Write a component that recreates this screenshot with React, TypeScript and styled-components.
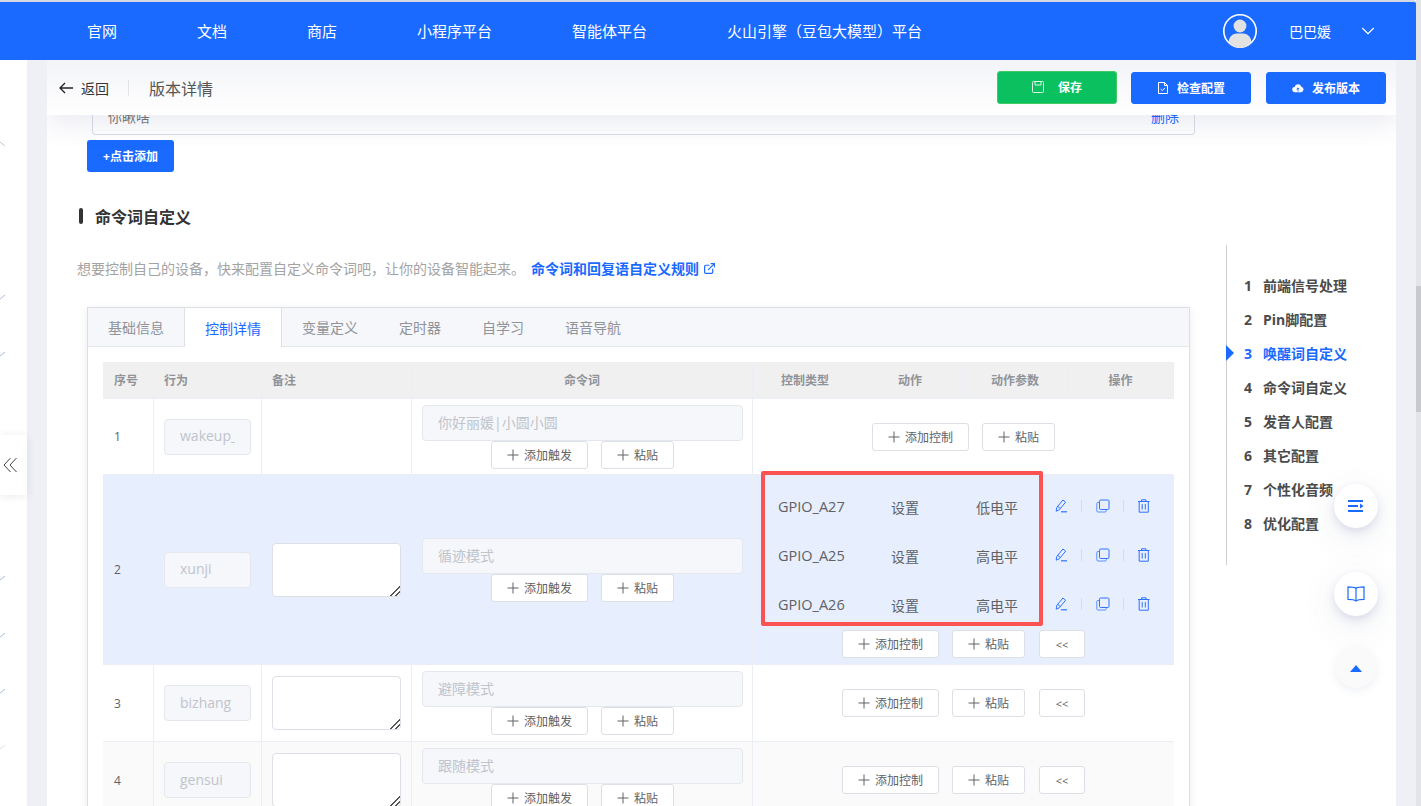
import React from "react";
import styled, { createGlobalStyle } from "styled-components";
import { ChevronDown, ExternalLink } from "lucide-react";

const BLUE = "#1a6aff";
const FONT = `"Open Sans", "Noto Sans CJK SC", "Noto Sans", sans-serif`;

const Global = createGlobalStyle`
  html, body { margin: 0; padding: 0; overflow: hidden; background: #fff; }
  body { font-family: ${FONT}; }
  * { box-sizing: border-box; }
`;

const Root = styled.div`
  display: flex;
  width: 1421px;
  height: 806px;
  overflow: hidden;
  background: #fff;
`;
const PageColumn = styled.div`
  width: 1416px;
  height: 806px;
  display: flex;
  flex-direction: column;
`;
const ScrollTrack = styled.div`
  width: 5px;
  height: 806px;
  padding-top: 286px;
  background: #e3e4e8;
`;
const ScrollThumb = styled.div`
  height: 126px;
  background: #c8c9cd;
`;
const TopBar = styled.header`
  height: 60px;
  flex-shrink: 0;
  display: flex;
  align-items: center;
  padding-left: 87px;
  gap: 80px;
  background: ${BLUE};
  border-top: 2px solid #d4d9e4;
  border-top-right-radius: 3px;
  color: #fff;
  font-size: 15px;
  position: relative;
  z-index: 3;
`;
const NavLink = styled.span`
  white-space: nowrap;
  line-height: 20px;
`;
const UserBox = styled.div`
  margin-left: auto;
  display: flex;
  align-items: center;
  font-size: 14px;
  padding-right: 37px;
`;
const UserName = styled.span`
  margin: 0 26px 0 31px;
`;
const Body = styled.div`
  flex: 1;
  min-height: 0;
  display: flex;
  background: #eef0f5;
`;
const LeftPanel = styled.aside`
  width: 27px;
  flex-shrink: 0;
  background: #fff;
  display: flex;
  flex-direction: column;
`;
const LeftMark = styled.svg<{ $top: number }>`
  display: block;
  margin-top: ${(p) => p.$top}px;
  flex-shrink: 0;
`;
const CollapseTab = styled.div`
  height: 60px;
  margin-top: 78px;
  flex-shrink: 0;
  display: flex;
  align-items: center;
  padding-left: 2px;
  background: #fff;
  box-shadow: 0 1px 8px rgba(40, 50, 90, 0.1);
`;
const Main = styled.main`
  position: relative;
  margin-left: 20px;
  width: 1349px;
  flex-shrink: 0;
  display: flex;
  flex-direction: column;
  background: #fff;
  overflow: hidden;
`;
const SubHeader = styled.div`
  position: relative;
  z-index: 2;
  height: 55px;
  flex-shrink: 0;
  display: flex;
  align-items: center;
  padding: 0 10px 0 12px;
  background: linear-gradient(180deg, #f3f4f8 0%, #ffffff 100%);
  box-shadow: 0 8px 28px rgba(70, 85, 140, 0.12);
`;
const BackLink = styled.div`
  display: flex;
  align-items: center;
  gap: 8px;
  font-size: 14px;
  color: #333;
`;
const SubDivider = styled.span`
  width: 1px;
  height: 16px;
  margin: 0 20px 0 19px;
  background: #e2e4ea;
`;
const PageTitle = styled.span`
  font-size: 16px;
  color: #555;
`;
const ActionGroup = styled.div`
  margin-left: auto;
  display: flex;
  align-items: center;
  gap: 14px;
`;
const ActionButton = styled.button<{ $green?: boolean; $last?: boolean }>`
  width: 120px;
  height: ${(p) => (p.$green ? 33 : 32)}px;
  margin-top: ${(p) => (p.$green ? -1 : 0)}px;
  margin-left: ${(p) => (p.$last ? 1 : 0)}px;
  display: flex;
  align-items: center;
  justify-content: center;
  gap: ${(p) => (p.$green ? 14 : 8)}px;
  border: 1px solid ${(p) => (p.$green ? "#3fc863" : BLUE)};
  border-radius: 3px;
  background: ${(p) => (p.$green ? "#0bc15f" : BLUE)};
  color: #fff;
  font: 700 12px ${FONT};
  padding: 0;
`;
const ContentRow = styled.div`
  display: flex;
  margin-top: -20px;
  flex: 1;
  min-height: 0;
`;
const ContentColumn = styled.div`
  width: 1179px;
  flex-shrink: 0;
  padding-left: 30px;
`;
const KeywordRow = styled.div`
  width: 1103px;
  height: 40px;
  margin-left: 15px;
  padding: 11px 15px 0;
  display: flex;
  justify-content: space-between;
  border: 1px solid #d9dce8;
  border-radius: 3px;
  font-size: 14px;
  line-height: 20px;
  color: #777;
`;
const DeleteLink = styled.span`
  color: ${BLUE};
  font-size: 14px;
`;
const AddButton = styled.button`
  display: block;
  width: 87px;
  height: 32px;
  margin: 5px 0 0 10px;
  padding: 0;
  border: 0;
  border-radius: 3px;
  background: ${BLUE};
  color: #fff;
  font: 700 12px ${FONT};
`;
const SectionTitle = styled.h2`
  margin: 32px 0 0 2px;
  height: 24px;
  display: flex;
  align-items: center;
  gap: 12px;
  font-size: 16px;
  font-weight: 700;
  color: #333;
  &::before {
    content: "";
    width: 4px;
    height: 16px;
    border-radius: 2px;
    background: #333;
  }
`;
const Description = styled.p`
  margin: 30px 0 0;
  height: 20px;
  display: flex;
  align-items: center;
  font-size: 14px;
  color: #a3a3a3;
  white-space: nowrap;
`;
const RuleLink = styled.a`
  margin-left: 6px;
  display: flex;
  align-items: center;
  gap: 4px;
  color: ${BLUE};
  font-weight: 700;
  font-size: 14px;
`;
const Card = styled.section`
  width: 1103px;
  margin: 29px 0 0 10px;
  border: 1px solid #dcdfe6;
  box-shadow: 0 2px 8px rgba(0, 0, 0, 0.08);
  background: #fff;
  height: 600px;
`;
const TabStrip = styled.div`
  height: 39px;
  display: flex;
  background: #f5f7fa;
  border-bottom: 1px solid #e4e7ed;
`;
const Tab = styled.div<{ $active?: boolean; $divider?: boolean }>`
  height: ${(p) => (p.$active ? 39 : 38)}px;
  padding: 0 20px;
  display: flex;
  align-items: center;
  font-size: 14px;
  color: ${(p) => (p.$active ? BLUE : "#909399")};
  background: ${(p) => (p.$active ? "#fff" : "transparent")};
  border-right: 1px solid ${(p) => (p.$divider ? "#dcdfe6" : "transparent")};
`;
const TablePad = styled.div`
  padding: 15px 15px 0;
`;
const Table = styled.table`
  width: 1071px;
  table-layout: fixed;
  border-collapse: separate;
  border-spacing: 0;
  font-size: 12px;
  color: #606266;
`;
const HeadCell = styled.th<{ $center?: boolean; $first?: boolean }>`
  height: 37px;
  padding: 0 10px 0 ${(p) => (p.$first ? 11 : 10)}px;
  text-align: ${(p) => (p.$center ? "center" : "left")};
  font-size: 12px;
  font-weight: 700;
  color: #909399;
  background: #f0f0f0;
  border-right: 1px solid #ebeef5;
  border-bottom: 1px solid #ebeef5;
`;
const Row = styled.tr<{ $bg: string; $h: number }>`
  height: ${(p) => p.$h}px;
  background: ${(p) => p.$bg};
`;
const Cell = styled.td<{ $first?: boolean }>`
  padding: 0 10px 0 ${(p) => (p.$first ? 11 : 10)}px;
  vertical-align: middle;
  border-right: 1px solid #ebeef5;
  border-bottom: 1px solid #ebeef5;
`;
const CommandCell = styled.td<{ $top: number }>`
  padding: ${(p) => p.$top}px 9px 0 10px;
  vertical-align: top;
  border-right: 1px solid #ebeef5;
  border-bottom: 1px solid #ebeef5;
`;
const TextBox = styled.input`
  display: block;
  width: 100%;
  height: 36px;
  padding: 0 15px 2px;
  border: 1px solid #e4e7ed;
  border-radius: 4px;
  outline: none;
  background: #f5f7fa;
  color: #c0c4cc;
  font: 14px ${FONT};
`;
const Note = styled.textarea`
  display: block;
  width: 129px;
  height: 54px;
  padding: 5px 15px;
  border: 1px solid #dcdfe6;
  border-radius: 4px;
  outline: none;
  background: #fff;
  font: 14px ${FONT};
  &::-webkit-resizer {
    background: linear-gradient(
      135deg,
      transparent 0 66%,
      #555 66% 72%,
      transparent 72% 82%,
      #555 82% 88%,
      transparent 88%
    );
  }
`;
const ButtonRow = styled.div`
  display: flex;
  justify-content: center;
  gap: 13px;
`;
const MiniButton = styled.button`
  height: 28px;
  padding: 0 15px;
  display: flex;
  align-items: center;
  gap: 5px;
  border: 1px solid #dcdfe6;
  border-radius: 3px;
  background: #fff;
  color: #606266;
  font: 12px ${FONT};
  white-space: nowrap;
`;
const FoldButton = styled(MiniButton)`
  width: 46px;
  justify-content: center;
  padding: 0;
  margin-left: 1px;
  font-size: 11px;
`;
const ControlCell = styled.td<{ $pad?: boolean }>`
  padding: ${(p) => (p.$pad ? "7px 0 0" : "0")};
  vertical-align: ${(p) => (p.$pad ? "top" : "middle")};
  border-bottom: 1px solid #ebeef5;
`;
const ControlList = styled.div`
  position: relative;
  margin-bottom: 1px;
`;
const ControlRow = styled.div`
  height: 49px;
  display: grid;
  grid-template-columns: 106px 92px 92px 1fr;
  align-items: center;
  font-size: 14px;
  color: #606266;
`;
const GpioName = styled.span`
  padding-left: 25px;
  font-size: 14.5px;
`;
const CenterText = styled.span`
  text-align: center;
`;
const IconGroup = styled.div`
  display: flex;
  align-items: center;
  padding-left: 10px;
  color: #2f72ff;
  margin-top: -1px;
`;
const IconDivider = styled.span`
  width: 1px;
  height: 12px;
  margin: 0 12.25px;
  background: #d5dbe8;
`;
const Highlight = styled.div`
  position: absolute;
  left: 8px;
  top: -11px;
  width: 282px;
  height: 155px;
  border: 4px solid #fb5252;
  border-radius: 2px;
  pointer-events: none;
`;
const Outline = styled.nav`
  width: 170px;
  height: 320px;
  margin-top: 150px;
  border-left: 1px solid #cfcfcf;
  padding-top: 23px;
  flex-shrink: 0;
`;
const OutlineItem = styled.div<{ $active?: boolean }>`
  position: relative;
  height: 34px;
  display: flex;
  align-items: center;
  padding-left: 17px;
  font-size: 14px;
  font-weight: 700;
  color: ${(p) => (p.$active ? BLUE : "#4b4b4b")};
  &::before {
    content: "";
    display: ${(p) => (p.$active ? "block" : "none")};
    position: absolute;
    left: -1px;
    top: 9px;
    border-left: 8px solid ${BLUE};
    border-top: 8px solid transparent;
    border-bottom: 8px solid transparent;
  }
`;
const OutlineNum = styled.span`
  width: 19px;
`;
const FabStack = styled.div`
  position: absolute;
  z-index: 2;
  left: 1287px;
  top: 424px;
  width: 44px;
  display: flex;
  flex-direction: column;
  align-items: center;
`;
const Fab = styled.div<{ $size: number; $gap: number; $soft?: boolean }>`
  width: ${(p) => p.$size}px;
  height: ${(p) => p.$size}px;
  margin-top: ${(p) => p.$gap}px;
  flex-shrink: 0;
  border-radius: 50%;
  display: flex;
  align-items: center;
  justify-content: center;
  background: ${(p) => (p.$soft ? "#fafafa" : "#fff")};
  box-shadow: ${(p) =>
    p.$soft
      ? "0 2px 10px rgba(70, 85, 140, 0.1)"
      : "0 4px 10px rgba(70, 85, 140, 0.16), 0 10px 36px rgba(70, 85, 140, 0.1)"};
`;

const BackArrowIcon = () => (
  <svg width="14" height="12" viewBox="0 0 14 12" fill="none" stroke="#222" strokeWidth="1.3">
    <path d="M14 6H1M6 1L1 6l5 5" />
  </svg>
);
const PlusIcon = () => (
  <svg width="12" height="12" viewBox="0 0 12 12" stroke="#606266" strokeWidth="1" fill="none">
    <path d="M6 .5v11M.5 6h11" />
  </svg>
);
const PencilIcon = () => (
  <svg width="16" height="16" viewBox="0 0 16 16" fill="none" stroke="currentColor" strokeWidth="1">
    <path d="M3.200 13.200l.5-3.600 6.200-7.600 2.700 2.200-6.200 7.500-3.200 1.500z" strokeLinejoin="round" />
    <path d="M4.500 8.200l2.700 2.200" />
    <path d="M8 13.800h6" strokeWidth="1.200" />
  </svg>
);
const CopyIcon = () => (
  <svg width="16" height="16" viewBox="0 0 16 16" fill="none" stroke="currentColor" strokeWidth="1">
    <rect x="4.500" y="2" width="9.500" height="9.500" rx="1.200" />
    <path d="M4.500 4.500H3A1.200 1.200 0 0 0 1.800 5.700v7.100A1.200 1.200 0 0 0 3 14h7.100a1.200 1.200 0 0 0 1.200-1.200v-1.300" opacity=".75" />
  </svg>
);
const TrashIcon = () => (
  <svg width="16" height="16" viewBox="0 0 16 16" fill="none" stroke="currentColor" strokeWidth="1">
    <path d="M2 3.500h11.500M5.500 3.500V1.800h4.500v1.700" />
    <path d="M3.200 3.500v10.700h9.100V3.500" />
    <path d="M6.200 6v5.500M9.300 6v5.500" />
  </svg>
);
const SaveIcon = () => (
  <svg width="12" height="12" viewBox="0 0 12 12" fill="none" stroke="#d8f7e4" strokeWidth="1">
    <rect x=".5" y=".5" width="11" height="11" rx="1" />
    <path d="M3 .5v3.500h6V.5" />
  </svg>
);
const CheckFileIcon = () => (
  <svg width="12" height="12" viewBox="0 0 12 12" fill="none" stroke="#fff" strokeWidth="1">
    <path d="M1.500.5h6l3 3v8h-9z" />
    <path d="M7.500.5v3h3M3.700 7l1.600 1.600L8 5.800" />
  </svg>
);
const CloudIcon = () => (
  <svg width="12" height="12" viewBox="0 0 12 12">
    <path d="M3 10.200a2.600 2.600 0 0 1-.4-5.200 3.500 3.500 0 0 1 6.700-.3A2.800 2.800 0 0 1 9.200 10.200z" fill="#fff" />
    <path d="M6 9.500V6M4.600 7.200L6 5.800l1.400 1.400" stroke={BLUE} fill="none" strokeWidth="1" />
  </svg>
);
const AvatarIcon = () => (
  <svg width="36" height="36" viewBox="0 0 36 36">
    <circle cx="18" cy="18" r="16.200" fill={BLUE} stroke="#fff" strokeWidth="1.600" />
    <circle cx="18" cy="13" r="6.400" fill="#e2e2e2" />
    <path d="M6.500 30c0-7 5-9.600 8-9.600h7c3 0 8 2.600 8 9.600a16 16 0 0 1-23 0z" fill="#e2e2e2" />
  </svg>
);
const ListFabIcon = () => (
  <svg width="16" height="13" viewBox="0 0 16 13" fill={BLUE}>
    <rect x="0" y="0" width="15" height="2" />
    <rect x="0" y="5" width="10" height="2" />
    <rect x="0" y="10" width="15" height="2" />
    <path d="M12 3.400L15.500 6 12 8.600z" />
  </svg>
);
const BookIcon = () => (
  <svg width="18" height="16" viewBox="0 0 18 16" fill="none" stroke={BLUE} strokeWidth="1.200">
    <path d="M9 2.200C7.500 1.200 5 .8 1 .8v12.600c4 0 6.500.5 8 1.600 1.500-1.100 4-1.600 8-1.600V.8c-4 0-6.500.4-8 1.400z" />
    <path d="M9 2.200V15" />
  </svg>
);
const UpIcon = () => (
  <svg width="12" height="7" viewBox="0 0 12 7" fill={BLUE}>
    <path d="M6 0l6 7H0z" />
  </svg>
);
const DoubleLeftIcon = () => (
  <svg width="16" height="16" viewBox="0 0 16 16" fill="none" stroke="#444" strokeWidth="1">
    <path d="M8.500 1L2 8l6.500 7M14.500 1L8 8l6.500 7" />
  </svg>
);

const navLinks = ["官网", "文档", "商店", "小程序平台", "智能体平台", "火山引擎（豆包大模型）平台"];
const tabs = ["基础信息", "控制详情", "变量定义", "定时器", "自学习", "语音导航"];
const outline = ["前端信号处理", "Pin脚配置", "唤醒词自定义", "命令词自定义", "发音人配置", "其它配置", "个性化音频", "优化配置"];
const controls = [
  ["GPIO_A27", "设置", "低电平"],
  ["GPIO_A25", "设置", "高电平"],
  ["GPIO_A26", "设置", "高电平"],
];
const markTops = [147, 51];
const lowerMarks = [80, 51, 50, 50];

const Check = ({ top, faint }: { top: number; faint?: boolean }) => (
  <LeftMark $top={top} width="6" height="6" viewBox="0 0 6 6">
    <path d="M0 5l5-4" stroke={faint ? "#dfe1e6" : "#a9bbdc"} strokeWidth="1" fill="none" />
  </LeftMark>
);

const AddRow = ({ label, fold }: { label: string; fold?: boolean }) => (
  <ButtonRow>
    <MiniButton><PlusIcon />{label}</MiniButton>
    <MiniButton><PlusIcon />粘贴</MiniButton>
    {fold && <FoldButton>&lt;&lt;</FoldButton>}
  </ButtonRow>
);

const NameCells = ({ no, name, note }: { no: number; name: string; note?: boolean }) => (
  <>
    <Cell $first>{no}</Cell>
    <Cell><TextBox readOnly value={name} /></Cell>
    <Cell>{note && <Note readOnly />}</Cell>
  </>
);

const Command = ({ top, text }: { top: number; text: string }) => (
  <CommandCell $top={top}>
    <TextBox readOnly value={text} />
    <AddRow label="添加触发" />
  </CommandCell>
);

export default function App() {
  return (
    <Root>
      <Global />
      <PageColumn>
        <TopBar>
          {navLinks.map((n) => <NavLink key={n}>{n}</NavLink>)}
          <UserBox>
            <AvatarIcon />
            <UserName>巴巴媛</UserName>
            <ChevronDown size={22} strokeWidth={1.2} />
          </UserBox>
        </TopBar>
        <Body>
          <LeftPanel>
            <LeftMark $top={81} width="6" height="6" viewBox="0 0 6 6">
              <path d="M0 1l5 4" stroke="#c4c6cc" strokeWidth="1" fill="none" />
            </LeftMark>
            {markTops.map((t, i) => <Check key={i} top={t} />)}
            <CollapseTab><DoubleLeftIcon /></CollapseTab>
            {lowerMarks.map((t, i) => <Check key={i} top={t} faint={i === 3} />)}
          </LeftPanel>
          <Main>
            <SubHeader>
              <BackLink><BackArrowIcon />返回</BackLink>
              <SubDivider />
              <PageTitle>版本详情</PageTitle>
              <ActionGroup>
                <ActionButton $green><SaveIcon />保存</ActionButton>
                <ActionButton><CheckFileIcon />检查配置</ActionButton>
                <ActionButton $last><CloudIcon />发布版本</ActionButton>
              </ActionGroup>
            </SubHeader>
            <ContentRow>
              <ContentColumn>
                <KeywordRow><span>你瞅啥</span><DeleteLink>删除</DeleteLink></KeywordRow>
                <AddButton>+点击添加</AddButton>
                <SectionTitle>命令词自定义</SectionTitle>
                <Description>
                  想要控制自己的设备，快来配置自定义命令词吧，让你的设备智能起来。
                  <RuleLink>命令词和回复语自定义规则<ExternalLink size={13} strokeWidth={2.2} /></RuleLink>
                </Description>
                <Card>
                  <TabStrip>
                    {tabs.map((t, i) => <Tab key={t} $active={i === 1} $divider={i < 2}>{t}</Tab>)}
                  </TabStrip>
                  <TablePad>
                    <Table>
                      <colgroup>
                        <col width="51" /><col width="108" /><col width="150" /><col width="341" />
                        <col width="105" /><col width="105" /><col width="105" /><col width="106" />
                      </colgroup>
                      <thead>
                        <tr>
                          <HeadCell $first>序号</HeadCell>
                          <HeadCell>行为</HeadCell>
                          <HeadCell>备注</HeadCell>
                          <HeadCell $center>命令词</HeadCell>
                          <HeadCell $center>控制类型</HeadCell>
                          <HeadCell $center>动作</HeadCell>
                          <HeadCell $center>动作参数</HeadCell>
                          <HeadCell $center>操作</HeadCell>
                        </tr>
                      </thead>
                      <tbody>
                        <Row $bg="#fff" $h={76}>
                          <NameCells no={1} name="wakeup_" />
                          <Command top={6} text="你好丽媛|小圆小圆" />
                          <ControlCell colSpan={4}><AddRow label="添加控制" /></ControlCell>
                        </Row>
                        <Row $bg="#e7eefd" $h={190}>
                          <NameCells no={2} name="xunji" note />
                          <Command top={63} text="循迹模式" />
                          <ControlCell colSpan={4} $pad>
                            <ControlList>
                              {controls.map(([g, a, v], i) => (
                                <ControlRow key={i}>
                                  <GpioName>{g}</GpioName>
                                  <CenterText>{a}</CenterText>
                                  <CenterText>{v}</CenterText>
                                  <IconGroup>
                                    <PencilIcon /><IconDivider /><CopyIcon /><IconDivider /><TrashIcon />
                                  </IconGroup>
                                </ControlRow>
                              ))}
                              <Highlight />
                            </ControlList>
                            <AddRow label="添加控制" fold />
                          </ControlCell>
                        </Row>
                        <Row $bg="#fff" $h={77}>
                          <NameCells no={3} name="bizhang" note />
                          <Command top={6} text="避障模式" />
                          <ControlCell colSpan={4}><AddRow label="添加控制" fold /></ControlCell>
                        </Row>
                        <Row $bg="#fafafa" $h={77}>
                          <NameCells no={4} name="gensui" note />
                          <Command top={6} text="跟随模式" />
                          <ControlCell colSpan={4}><AddRow label="添加控制" fold /></ControlCell>
                        </Row>
                      </tbody>
                    </Table>
                  </TablePad>
                </Card>
              </ContentColumn>
              <Outline>
                {outline.map((o, i) => (
                  <OutlineItem key={o} $active={i === 2}>
                    <OutlineNum>{i + 1}</OutlineNum>{o}
                  </OutlineItem>
                ))}
              </Outline>
            </ContentRow>
            <FabStack>
              <Fab $size={44} $gap={0}><ListFabIcon /></Fab>
              <Fab $size={44} $gap={44}><BookIcon /></Fab>
              <Fab $size={40} $gap={32} $soft><UpIcon /></Fab>
            </FabStack>
          </Main>
        </Body>
      </PageColumn>
      <ScrollTrack><ScrollThumb /></ScrollTrack>
    </Root>
  );
}
